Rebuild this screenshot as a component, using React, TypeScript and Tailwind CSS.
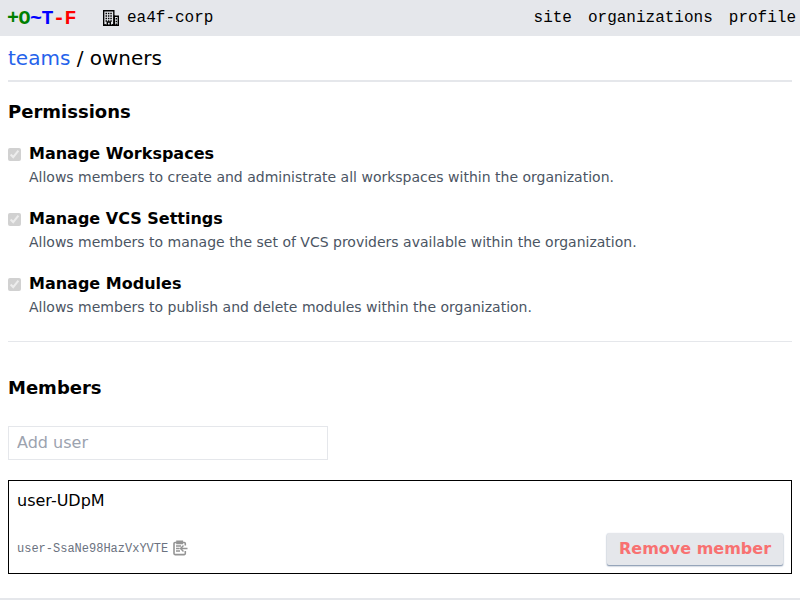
export default function App() {
  const perms = [
    ["Manage Workspaces", "Allows members to create and administrate all workspaces within the organization."],
    ["Manage VCS Settings", "Allows members to manage the set of VCS providers available within the organization."],
    ["Manage Modules", "Allows members to publish and delete modules within the organization."],
  ];
  return (
    <div className="h-[600px] overflow-hidden bg-white font-['DejaVu_Sans',sans-serif] text-base text-black">
      <header className="flex h-9 items-center justify-between bg-[#e5e7eb] pl-[7px] pr-1 font-['Liberation_Mono',monospace]">
        <div className="flex items-center">
          <span className="w-[95px] pt-0.5 text-xl leading-7 font-bold tracking-tight">
            <span className="text-[#008000]">+O</span><span className="text-[#0000ff]">~T</span><span className="text-[#ff0000]">-F</span>
          </span>
          <svg className="size-[18px]" viewBox="0 0 18 18" fill="none">
            <path fill="#000" d="M1 1h11.500v5.500H17V17H1z" />
            <path stroke="#e5e7eb" strokeWidth="8.800" d="M6.750 2.500v13" />
            <path stroke="#e5e7eb" strokeWidth="2.600" d="M14.300 8v7.500" />
            <path stroke="#000" strokeWidth="1.500" strokeDasharray="1.500 .900" d="M3.500 4.500h7M3.500 7h7M3.500 9.500h7M3.500 12h7" />
            <path stroke="#000" strokeWidth="1.400" d="M5.300 16v-3h3v3M3 15v1M10.800 15v1M14.300 9v1.500M14.300 11.700v1.500M14.300 14.400v1.500" />
            <path stroke="#000" strokeWidth="1.200" d="M12.200 6.500v10" />
          </svg>
          <span className="ml-[7px]">ea4f-corp</span>
        </div>
        <nav className="flex gap-4"><a>site</a><a>organizations</a><a>profile</a></nav>
      </header>
      <main className="px-2">
        <div className="flex h-[46px] items-center border-b-2 border-[#e5e7eb] text-xl">
          <span><a className="text-[#2563eb]">teams</a> / owners</span>
        </div>
        <h3 className="mt-4 text-lg font-semibold">Permissions</h3>
        <div className="mt-4 flex flex-col gap-5 border-b border-[#e5e7eb] pb-6">
          {perms.map(([t, d]) => (
            <div key={t} className="flex gap-2">
              <input type="checkbox" checked disabled readOnly className="mt-[6px] size-[13px]" />
              <div>
                <div className="font-semibold">{t}</div>
                <div className="mt-px text-sm text-[#4b5563]">{d}</div>
              </div>
            </div>
          ))}
        </div>
        <h3 className="mt-8 text-lg font-semibold">Members</h3>
        <input placeholder="Add user" className="mt-6 block h-[34px] w-80 border border-[#e5e7eb] px-2 pb-0.5 placeholder:text-[#9ca3af]" />
        <div className="mt-5 flex h-[94px] flex-col justify-between border border-black p-2">
          <div>user-UDpM</div>
          <div className="flex items-center justify-between">
            <div className="flex items-center gap-1 text-[#6b7280]">
              <span className="font-['Liberation_Mono',monospace] text-xs">user-SsaNe98HazVxYVTE</span>
              <svg className="mb-0.5 size-4" viewBox="0 0 16 16" fill="none" stroke="#949494" strokeWidth="1.600">
                <path d="M13.300 5.500V3.500q0-1-1-1H3q-1 0-1 1v10.100q0 1 1 1h9.300q1 0 1-1v-2.600M5 2.500V1.200h5.300v2.300H5z" />
                <path strokeWidth="1.400" d="M4 6h5M4 8.500h3.500M4 11h4M15.500 8.500H9M11.500 5.500l-3 3 3 3" />
              </svg>
            </div>
            <button className="h-8 w-[176px] rounded-xs bg-[#e5e7eb] font-bold text-[#f87171] shadow-[0_1px_1px_#94a3b8,0_1px_2px_#94a3b8]">Remove member</button>
          </div>
        </div>
      </main>
      <div className="mt-6 h-0.5 bg-[#e5e7eb]" />
    </div>
  );
}
